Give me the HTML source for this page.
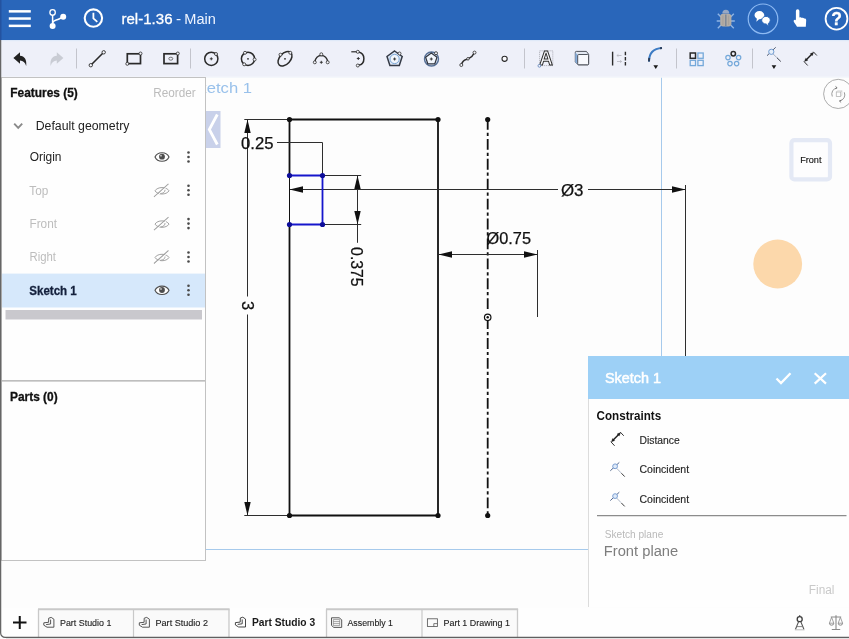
<!DOCTYPE html>
<html lang="en">
<head>
<meta charset="utf-8">
<title>rel-1.36 - Main</title>
<style>
html,body{margin:0;padding:0;background:#fdfdfd;overflow:hidden;}
body{width:849px;height:639px;position:relative;font-family:"Liberation Sans",sans-serif;}
svg{position:absolute;left:0;top:0;display:block;will-change:transform;}
text{font-family:"Liberation Sans",sans-serif;}
.ui{font-family:"DejaVu Sans","Liberation Sans",sans-serif;}
</style>
</head>
<body>
<svg id="app" width="849" height="639" viewBox="0 0 849 639">
<!-- ===== canvas background ===== -->
<rect x="0" y="0" width="849" height="639" fill="#fdfdfd"/>

<!-- ===== canvas drawing ===== -->
<g id="canvas">
  <!-- plane outline -->
  <line x1="661.5" y1="77" x2="661.5" y2="400" stroke="#a6caec" stroke-width="1"/>
  <line x1="205" y1="549.5" x2="600" y2="549.5" stroke="#a6caec" stroke-width="1"/>
  <line x1="205" y1="77.3" x2="849" y2="77.3" stroke="#f2f5fb" stroke-width="1"/>
  <text x="187.4" y="92.5" font-size="15.5" fill="#99c1eb" textLength="64.6" lengthAdjust="spacingAndGlyphs">Sketch 1</text>
  <!-- collapse tab -->
  <rect x="205" y="111" width="15.500" height="37" fill="#c9d1ea"/>
  <polyline points="217.300,114.500 209.300,129.500 217.300,144.500" fill="none" stroke="#ffffff" stroke-width="2.800"/>

  <!-- orange touch circle -->
  <circle cx="777.7" cy="264" r="24.4" fill="#fcd8ab"/>

  <!-- view cube -->
  <rect x="791.400" y="140.200" width="38.600" height="39.200" rx="3" fill="#fdfdfe" stroke="#e4e9f5" stroke-width="4.200"/>
  <text x="800.200" y="163.200" font-size="9.800" fill="#161616" stroke="#161616" stroke-width="0.150" textLength="21.300" lengthAdjust="spacingAndGlyphs">Front</text>
  <!-- rotate icon -->
  <circle cx="838.200" cy="93.900" r="14.600" fill="#fdfdfd" stroke="#a4a4a4" stroke-width="0.900"/>
  <path d="M832.300,96.500 a6.300,6.300 0 0 1 4.800,-8.700 M844.300,92.300 a6.300,6.300 0 0 1 -4.800,8.700" fill="none" stroke="#8f8f8f" stroke-width="0.900"/>
  <path d="M837.100,87.800 l-1.600,-1.400 M837.100,87.800 l-1.900,1 M839.500,101 l1.600,1.400 M839.500,101 l1.900,-1" fill="none" stroke="#6f6f6f" stroke-width="0.900"/>
  <rect x="836.300" y="92" width="4.400" height="4.400" fill="none" stroke="#b4b4b4" stroke-width="0.800"/>
  <path d="M836.300,92 l1.200,-1.200 h4.400 v4.400 l-1.200,1.200 M840.700,92 l1.200,-1.200" fill="none" stroke="#c4c4c4" stroke-width="0.600"/>
  <!-- main geometry -->
  <g stroke="#111" fill="none">
    <path d="M289.500,175.500 V119.500 H438 V515.500 H289.500 V224.500" stroke-width="1.800"/>
    <line x1="289.500" y1="175.500" x2="289.500" y2="224.500" stroke-width="1"/>
    <line x1="487.7" y1="119" x2="487.7" y2="515" stroke-width="1.8" stroke-dasharray="10.8,2.96,3.2,2.96"/>
    <!-- dim 3 vertical -->
    <g stroke-width="1" stroke="#2e2e2e">
      <line x1="244.3" y1="119.5" x2="289" y2="119.5"/>
      <line x1="244.3" y1="515.5" x2="289" y2="515.5"/>
      <line x1="247.500" y1="120" x2="247.500" y2="296.500"/>
      <line x1="247.500" y1="314.500" x2="247.500" y2="515"/>
      <!-- 0.25 -->
      <line x1="277" y1="142.500" x2="322.500" y2="142.500"/>
      <line x1="322.500" y1="142.500" x2="322.500" y2="175"/>
      <!-- 0.375 -->
      <line x1="322" y1="175.5" x2="361.2" y2="175.5"/>
      <line x1="322" y1="224.5" x2="361.2" y2="224.5"/>
      <line x1="357.5" y1="176" x2="357.5" y2="242.8"/>
      <!-- dia 3 -->
      <line x1="290" y1="189.500" x2="558" y2="189.500"/>
      <line x1="588" y1="189.500" x2="685" y2="189.500"/>
      <line x1="685.500" y1="185" x2="685.500" y2="357"/>
      <!-- dia 0.75 -->
      <line x1="439" y1="254.500" x2="537" y2="254.500"/>
      <line x1="537.500" y1="250" x2="537.500" y2="317"/>
    </g>
  </g>
  <!-- arrows -->
  <g fill="#111">
    <polygon points="247.500,119.500 244.300,133 250.700,133"/>
    <polygon points="247.500,515.500 244.300,502 250.700,502"/>
    <polygon points="357.500,175.500 354.300,189 360.700,189"/>
    <polygon points="357.500,224.500 354.300,211 360.700,211"/>
    <polygon points="289.500,189.500 303,186.300 303,192.700"/>
    <polygon points="685.500,189.500 672,186.300 672,192.700"/>
    <polygon points="438.500,254.500 452,251.300 452,257.700"/>
    <polygon points="537.500,254.500 524,251.300 524,257.700"/>
    <!-- points -->
    <circle cx="289.500" cy="119.500" r="2.600"/>
    <circle cx="438" cy="119.500" r="2.600"/>
    <circle cx="289.500" cy="515.500" r="2.600"/>
    <circle cx="438" cy="515.500" r="2.600"/>
    <circle cx="487.7" cy="119.5" r="2.6"/>
    <circle cx="487.7" cy="515.5" r="2.6"/>
  </g>
  <rect x="486" y="310" width="3.4" height="4" fill="#fdfdfd"/>
  <circle cx="487.7" cy="317.3" r="3.25" fill="#fdfdfd" stroke="#111" stroke-width="1.2"/>
  <circle cx="487.7" cy="317.3" r="1.2" fill="#111"/>
  <!-- blue selected rectangle -->
  <path d="M289.500,175.500 H322.500 V224.500 H289.500" fill="none" stroke="#1616cc" stroke-width="1.800"/>
  <g fill="#0d0d9a">
    <circle cx="289.500" cy="175.500" r="2.600"/>
    <circle cx="322.500" cy="175.500" r="2.600"/>
    <circle cx="289.500" cy="224.500" r="2.600"/>
    <circle cx="322.500" cy="224.500" r="2.600"/>
  </g>
  <!-- dimension text -->
  <g fill="#111" stroke="#111" stroke-width="0.25" font-size="16.5">
    <text x="241" y="148.500" textLength="32.500" lengthAdjust="spacingAndGlyphs">0.25</text>
    <text x="561" y="195.500" textLength="22.500" lengthAdjust="spacingAndGlyphs">Ø3</text>
    <text x="486.500" y="244" textLength="44.500" lengthAdjust="spacingAndGlyphs">Ø0.75</text>
    <text transform="translate(350.9,247.1) rotate(90)" x="0" y="0" textLength="39.5" lengthAdjust="spacingAndGlyphs">0.375</text>
    <text transform="translate(241.500,301) rotate(90)" x="0" y="0">3</text>
  </g>
</g>

<!-- ===== top bar ===== -->
<g id="topbar">
  <rect x="0" y="0" width="849" height="40" fill="#2966ba"/>
  <rect x="0" y="0" width="1.500" height="40" fill="#2453a0"/>
  <!-- hamburger -->
  <g fill="#fff">
    <rect x="8.800" y="10.100" width="22" height="2.500"/>
    <rect x="8.800" y="17.300" width="22" height="2.500"/>
    <rect x="8.800" y="24.600" width="22" height="2.500"/>
  </g>
  <!-- branch -->
  <g stroke="#fff" fill="none" stroke-width="1.500">
    <line x1="52.600" y1="15" x2="52.600" y2="25"/>
    <path d="M52.600,23 C53,20 56,20.500 59,19 C61,18 62,17.500 63,16.800"/>
    <circle cx="52.600" cy="12.400" r="2.700" stroke-width="1.300"/>
  </g>
  <circle cx="52.600" cy="26" r="3" fill="#fff"/>
  <circle cx="63.200" cy="16.700" r="3" fill="#fff"/>
  <!-- clock -->
  <circle cx="93.400" cy="18.100" r="8.700" fill="none" stroke="#fff" stroke-width="2.100"/>
  <polyline points="93.400,12.800 93.400,18.300 97.300,21.800" fill="none" stroke="#fff" stroke-width="1.800"/>
  <!-- title -->
  <text x="121.500" y="24.300" font-size="15.500" fill="#fff" stroke="#fff" stroke-width="0.300" textLength="51" lengthAdjust="spacingAndGlyphs">rel-1.36</text>
  <text x="175.9" y="24.3" font-size="15.5" fill="#eef4ff">-</text>
  <text x="184.3" y="24.3" font-size="15.5" fill="#eef4ff" textLength="31.6" lengthAdjust="spacingAndGlyphs">Main</text>
  <!-- bug -->
  <g id="bug">
    <g stroke="#8fb4e4" stroke-width="1.400" fill="none">
      <path d="M721,17 l-3.200,-3.200 M720.500,21 h-3.800 M721,25 l-3.200,3.200 M730.600,17 l3.200,-3.200 M731,21 h3.800 M730.600,25 l3.200,3.200"/>
    </g>
    <path d="M722.300,13.600 a3.500,3.900 0 0 1 7,0 z" fill="#97a8c4"/>
    <rect x="720.200" y="13.800" width="11.200" height="12.600" rx="3" fill="#b3ada6"/>
    <rect x="725.300" y="14.500" width="1.100" height="11.500" fill="#6c7a92"/>
    <rect x="722.600" y="15.500" width="0.700" height="9.500" fill="#a09a94"/>
    <rect x="728.400" y="15.500" width="0.700" height="9.500" fill="#a09a94"/>
  </g>
  <!-- chat -->
  <circle cx="763" cy="18.800" r="14.800" fill="none" stroke="#8dbaf3" stroke-width="1.200"/>
  <g fill="#fff">
    <path d="M754.500,15.200 a4.900,4.100 0 1 1 4.600,4.100 l-2.800,2.400 l0.600,-3 a4.900,4.100 0 0 1 -2.400,-3.500z"/>
    <path d="M770.300,20.200 a4.300,3.800 0 1 0 -4.100,3.800 l2.600,2.300 l-0.500,-2.900 a4.300,3.800 0 0 0 2,-3.200z" stroke="#2966ba" stroke-width="0.900"/>
  </g>
  <!-- hand -->
  <path d="M795.900,10.900 a1.750,1.750 0 0 1 3.500,0 v6.600 c1.100,-0.600 2,-0.300 2.400,0.400 c1,-0.500 1.900,-0.100 2.300,0.700 c1.200,-0.300 2.100,0.400 2.100,1.700 l-0.400,6.500 h-8.800 c-0.800,-1.900 -2.300,-3.300 -3.200,-5.100 c-0.600,-1.400 1,-2.500 2,-1.400 l0.100,0.200 z" fill="#fff"/>
  <!-- help -->
  <circle cx="836.500" cy="18.700" r="10.900" fill="none" stroke="#fff" stroke-width="1.800"/>
  <text x="836.500" y="25" font-size="17.500" font-weight="bold" fill="#fff" stroke="#fff" stroke-width="0.300" text-anchor="middle">?</text>
</g>

<!-- ===== toolbar ===== -->
<g id="toolbar">
  <rect x="0" y="40" width="849" height="36.8" fill="#eef0f9"/>
  <rect x="0" y="40" width="849" height="1.200" fill="#dfe9f8"/>
  <!-- separators -->
  <g stroke="#c3c4cc" stroke-width="1">
    <line x1="76.500" y1="48.500" x2="76.500" y2="68.500"/>
    <line x1="190.500" y1="48.500" x2="190.500" y2="68.500"/>
    <line x1="524.500" y1="48.500" x2="524.500" y2="68.500"/>
    <line x1="676.500" y1="48.500" x2="676.500" y2="68.500"/>
    <line x1="752.500" y1="48.500" x2="752.500" y2="68.500"/>
  </g>
  <!-- undo -->
  <path id="undo" d="M13.400,58 L20,52.300 V55.700 C24.500,55.900 27,59.500 26.200,66 C25,62.300 23.200,60.600 20,60.500 V63.800 Z" fill="#222"/>
  <!-- redo -->
  <path d="M63.400,58 L56.800,52.300 V55.700 C52.300,55.900 49.800,59.500 50.600,66 C51.800,62.300 53.600,60.600 56.800,60.500 V63.800 Z" fill="#c9ccd4"/>
  <!-- line -->
  <g stroke="#2a2a2a" fill="#f4f5fb">
    <line x1="91.500" y1="64.500" x2="103" y2="53" stroke-width="1.600"/>
    <circle cx="90.800" cy="65.200" r="1.700" stroke-width="0.900"/>
    <circle cx="103.700" cy="52.300" r="1.700" stroke-width="0.900"/>
  </g>
  <!-- rectangle -->
  <g stroke="#2a2a2a" fill="none">
    <rect x="127.300" y="53.800" width="13.200" height="9.800" stroke-width="1.700"/>
    <circle cx="140.500" cy="53.500" r="1.500" fill="#f4f5fb" stroke-width="0.800"/>
    <circle cx="127.300" cy="63.800" r="1.500" fill="#f4f5fb" stroke-width="0.800"/>
  </g>
  <!-- center rectangle -->
  <g stroke="#2a2a2a" fill="none">
    <rect x="164" y="53.800" width="13.600" height="9.800" stroke-width="1.700"/>
    <circle cx="177.800" cy="53.500" r="1.500" fill="#f4f5fb" stroke-width="0.800"/>
    <ellipse cx="170.800" cy="58.700" rx="2" ry="1.500" stroke-width="0.800" stroke="#555"/>
  </g>
  <!-- circle -->
  <g stroke="#2a2a2a" fill="none">
    <circle cx="211.300" cy="58.800" r="6.600" stroke-width="1.500"/>
    <path d="M209.800,58.800 h3 M211.300,57.300 v3" stroke-width="0.900"/>
    <circle cx="216" cy="54" r="1.500" fill="#f4f5fb" stroke-width="0.800"/>
  </g>
  <!-- 3 point circle -->
  <g stroke="#2a2a2a" fill="none">
    <circle cx="248" cy="58.800" r="6.600" stroke-width="1.500"/>
    <circle cx="248" cy="58.800" r="0.900" fill="#2a2a2a" stroke="none"/>
    <circle cx="245" cy="52.800" r="1.500" fill="#f4f5fb" stroke-width="0.800"/>
    <circle cx="254.600" cy="59.500" r="1.500" fill="#f4f5fb" stroke-width="0.800"/>
    <circle cx="244.200" cy="64.300" r="1.500" fill="#f4f5fb" stroke-width="0.800"/>
  </g>
  <!-- ellipse -->
  <g stroke="#2a2a2a" fill="none">
    <ellipse cx="285" cy="58.800" rx="8.500" ry="5.400" transform="rotate(-47 285 58.800)" stroke-width="1.500"/>
    <circle cx="285" cy="58.800" r="0.900" fill="#2a2a2a" stroke="none"/>
    <circle cx="280.500" cy="54.700" r="1.500" fill="#f4f5fb" stroke-width="0.800"/>
    <circle cx="290.300" cy="52.800" r="1.500" fill="#f4f5fb" stroke-width="0.800"/>
  </g>
  <!-- 3 point arc -->
  <g stroke="#2a2a2a" fill="none">
    <path d="M314.800,62 A6.600,8 0 0 1 327.800,62" stroke-width="1.500"/>
    <path d="M319.800,62.300 h3 M321.300,60.800 v3" stroke-width="0.900"/>
    <circle cx="314.800" cy="62.300" r="1.500" fill="#f4f5fb" stroke-width="0.800"/>
    <circle cx="327.700" cy="62.300" r="1.500" fill="#f4f5fb" stroke-width="0.800"/>
    <circle cx="321.300" cy="54.300" r="1.500" fill="#f4f5fb" stroke-width="0.800"/>
  </g>
  <!-- tangent arc -->
  <g stroke="#2a2a2a" fill="none">
    <line x1="351.300" y1="51.800" x2="357" y2="51.800" stroke-width="1.200"/>
    <path d="M358.500,52 A6.800,6.800 0 0 1 358.500,65.300" stroke-width="1.500"/>
    <path d="M356.800,58.500 h3 M358.300,57 v3" stroke-width="0.900"/>
    <circle cx="357.800" cy="51.800" r="1.500" fill="#f4f5fb" stroke-width="0.800"/>
    <circle cx="357.800" cy="65.500" r="1.500" fill="#f4f5fb" stroke-width="0.800"/>
  </g>
  <!-- inscribed polygon -->
  <g fill="none">
    <polygon points="394.600,51 402.200,56.500 399.300,65.400 389.900,65.400 387,56.500" stroke="#353b47" stroke-width="1.500" fill="#dfe8f6"/>
    <circle cx="394.600" cy="59" r="4.600" stroke="#7aa6d6" stroke-width="1" fill="#f2f6fc"/>
    <path d="M393.100,59 h3 M394.600,57.500 v3" stroke="#2a2a2a" stroke-width="0.900"/>
    <circle cx="399.500" cy="53.500" r="1.500" fill="#f4f5fb" stroke="#2a2a2a" stroke-width="0.800"/>
  </g>
  <!-- circumscribed polygon -->
  <g fill="none">
    <circle cx="431.5" cy="59" r="7" stroke="#566f96" stroke-width="1.4" fill="#dfe8f6"/>
    <polygon points="431.300,53 437,57.200 434.800,63.800 427.800,63.800 425.600,57.200" stroke="#2f3540" stroke-width="1.200" fill="#f2f6fc"/>
    <path d="M429.800,59 h3 M431.300,57.500 v3" stroke="#2a2a2a" stroke-width="0.900"/>
    <circle cx="436" cy="53.200" r="1.500" fill="#f4f5fb" stroke="#2a2a2a" stroke-width="0.800"/>
  </g>
  <!-- spline -->
  <g stroke="#2a2a2a" fill="none">
    <path d="M461.500,64.500 C463,59 466,60 468,58.800 C470.500,57.500 472.500,57 474.200,53" stroke-width="1.500"/>
    <circle cx="461.300" cy="65" r="1.500" fill="#f4f5fb" stroke-width="0.800"/>
    <circle cx="468" cy="58.800" r="1.300" fill="#f4f5fb" stroke-width="0.800"/>
    <circle cx="474.500" cy="52.600" r="1.500" fill="#f4f5fb" stroke-width="0.800"/>
  </g>
  <!-- point -->
  <circle cx="504.600" cy="58.800" r="2.600" fill="#fbfbfe" stroke="#2a2a2a" stroke-width="1.100"/>
  <!-- text tool -->
  <g>
    <rect x="539.6" y="50.8" width="13.2" height="14.8" fill="none" stroke="#8a8a94" stroke-width="0.7" stroke-dasharray="1,1"/>
    <text x="546.1" y="65" font-size="19.5" font-weight="bold" text-anchor="middle" fill="#fbfbfe" stroke="#2a2a2a" stroke-width="1" textLength="13.6" lengthAdjust="spacingAndGlyphs">A</text>
    <circle cx="539.4" cy="65.8" r="1.4" fill="#f4f5fb" stroke="#5b7fb8" stroke-width="0.8"/>
  </g>
  <!-- use / convert -->
  <g stroke-linejoin="round">
    <path d="M575.3,52.4 Q575.3,51.4 576.3,51.4 H586.4 L588.6,54.2 V63.8 Q588.6,64.8 587.6,64.8 H578.2 L575.3,61.9 Z" fill="#e3e8f2" stroke="#3f444d" stroke-width="0.9"/>
    <path d="M575.3,52.4 L577.7,54.8 V64.4 L575.3,61.9 Z" fill="#86addb"/>
    <rect x="577.7" y="54.5" width="10.9" height="10.3" rx="1" fill="#f8f9fd" stroke="#3f444d" stroke-width="0.9"/>
  </g>
  <!-- mirror -->
  <g fill="none">
    <line x1="612.600" y1="51.700" x2="612.600" y2="65.500" stroke="#2a2a2a" stroke-width="1.400"/>
    <line x1="625.400" y1="51.700" x2="625.400" y2="65.500" stroke="#2a2a2a" stroke-width="1.400" stroke-dasharray="3.600,1.600"/>
    <path d="M617,55.500 h4.500 M617,61.500 h4.500" stroke="#b4b4bc" stroke-width="0.800"/>
    <path d="M618.500,54.300 l-1.700,1.200 l1.700,1.200 M620,60.300 l1.700,1.200 l-1.700,1.200" stroke="#b4b4bc" stroke-width="0.700"/>
  </g>
  <!-- fillet -->
  <path d="M649,61.500 C649,53 654,48.500 662,48" fill="none" stroke="#3d7cc4" stroke-width="2"/>
  <path d="M649,61.500 C649,60 649.100,59 649.300,58 M660,48.200 L662,48" fill="none" stroke="#2b3f5c" stroke-width="2"/>
  <polygon points="653.400,65.300 658.100,65.300 655.750,68.900" fill="#1a1a1a"/>
  <!-- linear pattern -->
  <g fill="none" stroke-width="1.300">
    <rect x="690.200" y="53" width="5.300" height="5.300" stroke="#2a2a2a" stroke-width="1.500"/>
    <rect x="697.900" y="53" width="5.300" height="5.300" stroke="#74a8da"/>
    <rect x="690.200" y="60.300" width="5.300" height="5.300" stroke="#74a8da"/>
    <rect x="697.900" y="60.300" width="5.300" height="5.300" stroke="#74a8da"/>
  </g>
  <!-- circular pattern -->
  <g fill="none" stroke-width="1.200">
    <circle cx="733.300" cy="53.800" r="2.200" stroke="#2a2a2a" stroke-width="1.500"/>
    <circle cx="738.600" cy="57.600" r="2.200" stroke="#74a8da"/>
    <circle cx="736.600" cy="63.600" r="2.200" stroke="#74a8da"/>
    <circle cx="730" cy="63.600" r="2.200" stroke="#74a8da"/>
    <circle cx="728" cy="57.600" r="2.200" stroke="#74a8da"/>
  </g>
  <!-- coincident -->
  <g fill="none">
    <line x1="767" y1="55.700" x2="775.700" y2="47.300" stroke="#4d5a72" stroke-width="1"/>
    <line x1="773" y1="53.800" x2="777" y2="57.800" stroke="#9aa5b8" stroke-width="0.900"/>
    <line x1="777" y1="57.800" x2="780.800" y2="61.500" stroke="#3a3f4a" stroke-width="1"/>
    <circle cx="771.300" cy="51.800" r="2.600" fill="#e6effa" stroke="#6f9ad0" stroke-width="1"/>
    <polygon points="771.600,65.300 776.300,65.300 773.950,68.900" fill="#1a1a1a"/>
  </g>
  <!-- dimension -->
  <g fill="none" stroke="#1e1e1e">
    <line x1="805.81" y1="60.18" x2="812.24" y2="53.72" stroke-width="1.400"/>
    <polygon points="804.40,61.60 807.86,60.25 805.73,58.13" fill="#1e1e1e" stroke-width="0.300"/>
    <polygon points="813.65,52.30 812.32,55.77 810.19,53.65" fill="#1e1e1e" stroke-width="0.300"/>
    <path d="M803.90,61.40 L807.70,65.50 M813.35,51.80 L816.85,55.50" stroke-width="0.900"/>
  </g>
</g>

<!-- ===== left panel ===== -->
<g id="leftpanel">
  <rect x="1.5" y="77.5" width="204" height="483" fill="#fefefe" stroke="#c2c2c2" stroke-width="1"/>
  <rect x="2" y="273.6" width="203" height="33.9" fill="#d6e8fb"/>
  <rect x="5.500" y="310" width="196.500" height="9.500" fill="#c9c8cd"/>
  <line x1="2" y1="380.9" x2="205" y2="380.9" stroke="#a9a9a9" stroke-width="1.2"/>
  <text x="10.300" y="96.800" font-size="12.300" font-weight="bold" fill="#111" stroke="#111" stroke-width="0.3" textLength="67.500" lengthAdjust="spacingAndGlyphs">Features (5)</text>
  <text x="153.200" y="97.300" font-size="12.300" fill="#bcbcbc" textLength="42.500" lengthAdjust="spacingAndGlyphs">Reorder</text>
  <polyline points="14.2,123.7 18.2,127.9 22.2,123.7" fill="none" stroke="#8a8a8a" stroke-width="1.9"/>
  <text x="35.700" y="130.100" font-size="12.300" fill="#222" textLength="93.700" lengthAdjust="spacingAndGlyphs">Default geometry</text>
  <text x="29.700" y="161.200" font-size="12.300" fill="#222" textLength="31.800" lengthAdjust="spacingAndGlyphs">Origin</text>
  <text x="29.300" y="194.500" font-size="12.300" fill="#bdbdbd" textLength="19" lengthAdjust="spacingAndGlyphs">Top</text>
  <text x="29.500" y="227.800" font-size="12.300" fill="#bdbdbd" textLength="27.500" lengthAdjust="spacingAndGlyphs">Front</text>
  <text x="29.500" y="261.200" font-size="12.300" fill="#bdbdbd" textLength="26.500" lengthAdjust="spacingAndGlyphs">Right</text>
  <text x="29.300" y="294.600" font-size="12.300" font-weight="bold" fill="#14203c" stroke="#14203c" stroke-width="0.3" textLength="47.500" lengthAdjust="spacingAndGlyphs">Sketch 1</text>
  <text x="10" y="400.8" font-size="12.300" font-weight="bold" fill="#111" stroke="#111" stroke-width="0.3" textLength="47.700" lengthAdjust="spacingAndGlyphs">Parts (0)</text>
  <g transform="translate(162,157)">
    <path d="M-7,0 C-4.500,-5.600 4.500,-5.600 7,0 C4.500,5.600 -4.500,5.600 -7,0 Z" fill="#fefefe" stroke="#4d4d4d" stroke-width="1.100"/>
    <circle cx="0" cy="-0.300" r="2.900" fill="#4d4d4d"/>
    <circle cx="-1" cy="-1.300" r="0.900" fill="#fefefe" opacity="0.700"/>
  </g>
  <g fill="#4a4a4a"><circle cx="188.500" cy="152.5" r="1.3"/><circle cx="188.500" cy="157" r="1.3"/><circle cx="188.500" cy="161.5" r="1.3"/></g>
  <g transform="translate(162,190.3)" fill="none" stroke="#a2a2a2">
    <path d="M-7,0.500 C-4.500,-3.800 4.500,-3.800 7,0.500 C4.500,4.800 -4.500,4.800 -7,0.500 Z" stroke-width="1"/>
    <path d="M-2.500,2.500 C-0.500,4 3,2.500 3,-0.500" stroke-width="1"/>
    <line x1="-8" y1="6.500" x2="6.500" y2="-6.500" stroke-width="1.100"/>
    <line x1="-7.200" y1="7.400" x2="7.300" y2="-5.600" stroke-width="1" stroke="#fefefe"/>
  </g>
  <g fill="#4a4a4a"><circle cx="188.500" cy="185.8" r="1.3"/><circle cx="188.500" cy="190.3" r="1.3"/><circle cx="188.500" cy="194.8" r="1.3"/></g>
  <g transform="translate(162,223.6)" fill="none" stroke="#a2a2a2">
    <path d="M-7,0.500 C-4.500,-3.800 4.500,-3.800 7,0.500 C4.500,4.800 -4.500,4.800 -7,0.500 Z" stroke-width="1"/>
    <path d="M-2.500,2.500 C-0.500,4 3,2.500 3,-0.500" stroke-width="1"/>
    <line x1="-8" y1="6.500" x2="6.500" y2="-6.500" stroke-width="1.100"/>
    <line x1="-7.200" y1="7.400" x2="7.300" y2="-5.600" stroke-width="1" stroke="#fefefe"/>
  </g>
  <g fill="#4a4a4a"><circle cx="188.500" cy="219.1" r="1.3"/><circle cx="188.500" cy="223.6" r="1.3"/><circle cx="188.500" cy="228.1" r="1.3"/></g>
  <g transform="translate(162,257)" fill="none" stroke="#a2a2a2">
    <path d="M-7,0.500 C-4.500,-3.800 4.500,-3.800 7,0.500 C4.500,4.800 -4.500,4.800 -7,0.500 Z" stroke-width="1"/>
    <path d="M-2.500,2.500 C-0.500,4 3,2.500 3,-0.500" stroke-width="1"/>
    <line x1="-8" y1="6.500" x2="6.500" y2="-6.500" stroke-width="1.100"/>
    <line x1="-7.200" y1="7.400" x2="7.300" y2="-5.600" stroke-width="1" stroke="#fefefe"/>
  </g>
  <g fill="#4a4a4a"><circle cx="188.500" cy="252.5" r="1.3"/><circle cx="188.500" cy="257" r="1.3"/><circle cx="188.500" cy="261.5" r="1.3"/></g>
  <g transform="translate(162,290.3)">
    <path d="M-7,0 C-4.500,-5.600 4.500,-5.600 7,0 C4.500,5.600 -4.500,5.600 -7,0 Z" fill="#fefefe" stroke="#4d4d4d" stroke-width="1.100"/>
    <circle cx="0" cy="-0.300" r="2.900" fill="#4d4d4d"/>
    <circle cx="-1" cy="-1.300" r="0.900" fill="#fefefe" opacity="0.700"/>
  </g>
  <g fill="#4a4a4a"><circle cx="188.500" cy="285.8" r="1.3"/><circle cx="188.500" cy="290.3" r="1.3"/><circle cx="188.500" cy="294.8" r="1.3"/></g>
</g>

<!-- ===== right panel ===== -->
<g id="rightpanel">
  <rect x="588" y="356" width="261" height="251.500" fill="#fefefe"/>
  <rect x="588" y="356" width="261" height="43" fill="#9dd0f6"/>
  <line x1="588.500" y1="399" x2="588.500" y2="607" stroke="#dcdcdc" stroke-width="1"/>
  <text x="604.900" y="383.300" font-size="14.300" fill="#fff" stroke="#fff" stroke-width="0.5" textLength="56" lengthAdjust="spacingAndGlyphs">Sketch 1</text>
  <polyline points="776.500,378.500 781,383 790.500,373.300" fill="none" stroke="#fff" stroke-width="2.300"/>
  <path d="M814.700,373.300 L826,383.600 M826,373.300 L814.700,383.600" fill="none" stroke="#fff" stroke-width="2.200"/>
  <text x="596.600" y="420.200" font-size="12" font-weight="bold" fill="#111" textLength="64.600" lengthAdjust="spacingAndGlyphs">Constraints</text>
  <!-- distance icon -->
  <g fill="none" stroke="#1e1e1e">
    <line x1="612.71" y1="440.48" x2="619.14" y2="434.02" stroke-width="1.400"/>
    <polygon points="611.30,441.90 614.76,440.55 612.63,438.43" fill="#1e1e1e" stroke-width="0.300"/>
    <polygon points="620.55,432.60 619.22,436.07 617.09,433.95" fill="#1e1e1e" stroke-width="0.300"/>
    <path d="M610.80,441.70 L614.60,445.80 M620.25,432.10 L623.75,435.80" stroke-width="0.900"/>
  </g>
  <text x="639.500" y="443.500" font-size="10.300" fill="#262626" stroke="#262626" stroke-width="0.150" textLength="40.200" lengthAdjust="spacingAndGlyphs">Distance</text>
  <g transform="translate(615.100,466.5)" fill="none">
    <line x1="-4.800" y1="4.300" x2="4.200" y2="-4.100" stroke="#53678c" stroke-width="1"/>
    <line x1="1.500" y1="1.700" x2="6" y2="6.400" stroke="#a3aec0" stroke-width="0.900"/>
    <line x1="6.300" y1="6.700" x2="9.600" y2="10.100" stroke="#3c3c3c" stroke-width="1"/>
    <circle cx="0" cy="-0.200" r="2.400" fill="#dfeaf8" stroke="#7a9fd4" stroke-width="1"/>
  </g>
  <text x="639.500" y="473.300" font-size="10.300" fill="#262626" stroke="#262626" stroke-width="0.150" textLength="49.600" lengthAdjust="spacingAndGlyphs">Coincident</text>
  <g transform="translate(615.100,496.3)" fill="none">
    <line x1="-4.800" y1="4.300" x2="4.200" y2="-4.100" stroke="#53678c" stroke-width="1"/>
    <line x1="1.500" y1="1.700" x2="6" y2="6.400" stroke="#a3aec0" stroke-width="0.900"/>
    <line x1="6.300" y1="6.700" x2="9.600" y2="10.100" stroke="#3c3c3c" stroke-width="1"/>
    <circle cx="0" cy="-0.200" r="2.400" fill="#dfeaf8" stroke="#7a9fd4" stroke-width="1"/>
  </g>
  <text x="639.500" y="503.100" font-size="10.300" fill="#262626" stroke="#262626" stroke-width="0.150" textLength="49.600" lengthAdjust="spacingAndGlyphs">Coincident</text>
  <line x1="597" y1="515.600" x2="846.500" y2="515.600" stroke="#8c8c8c" stroke-width="1.100"/>
  <text x="604.700" y="538" font-size="10.300" fill="#b9b9b9" textLength="58.600" lengthAdjust="spacingAndGlyphs">Sketch plane</text>
  <text x="603.800" y="555.500" font-size="14" fill="#7d7d7d" textLength="74.400" lengthAdjust="spacingAndGlyphs">Front plane</text>
  <text x="808.800" y="594.100" font-size="12.300" fill="#c9c9c9" textLength="25.600" lengthAdjust="spacingAndGlyphs">Final</text>
</g>

<!-- ===== bottom bar ===== -->
<g id="bottombar">
  <rect x="1.500" y="607.500" width="848" height="29.500" fill="#fefefe"/>
  <!-- tab groups -->
  <rect x="38.500" y="609.500" width="190.500" height="28" fill="#fafafa"/>
  <rect x="326.500" y="609.500" width="190.500" height="28" fill="#fafafa"/>
  <g fill="none" stroke="#c9c9c9">
    <path d="M38.500,637 V609.300 M229,609.300 V637" stroke-width="1.300"/>
    <line x1="38" y1="609.300" x2="229.600" y2="609.300" stroke-width="2"/>
    <line x1="133.500" y1="609" x2="133.500" y2="637" stroke-width="1.200"/>
    <path d="M326.500,637 V609.300 M517.500,609.300 V637" stroke-width="1.300"/>
    <line x1="326" y1="609.300" x2="518.100" y2="609.300" stroke-width="2"/>
    <line x1="422" y1="609" x2="422" y2="637" stroke-width="1.200"/>
  </g>
  <!-- plus -->
  <path d="M13,622.500 H26.500 M19.750,616 V629" stroke="#111" stroke-width="2" fill="none"/>
  <path transform="translate(43.7,617.3)" d="M5,0.900 L7.500,0.100 L10.200,1.900 V9.900 H3.300 L0.100,7.900 V5.500 L4.900,5 Z M2.400,7.300 L6.900,6.700 V2.300" fill="none" stroke="#444" stroke-width="0.900" stroke-linejoin="round"/>
  <text x="60" y="625.800" font-size="9.200" fill="#1c1c1c" stroke="#1c1c1c" stroke-width="0.120" textLength="51.400" lengthAdjust="spacingAndGlyphs">Part Studio 1</text>
  <path transform="translate(139.2,617.3)" d="M5,0.900 L7.500,0.100 L10.200,1.900 V9.900 H3.300 L0.100,7.900 V5.500 L4.900,5 Z M2.400,7.300 L6.900,6.700 V2.300" fill="none" stroke="#444" stroke-width="0.900" stroke-linejoin="round"/>
  <text x="155.500" y="625.800" font-size="9.200" fill="#1c1c1c" stroke="#1c1c1c" stroke-width="0.120" textLength="52.500" lengthAdjust="spacingAndGlyphs">Part Studio 2</text>
  <path transform="translate(235.3,617.1)" d="M5,0.900 L7.500,0.100 L10.200,1.900 V9.900 H3.300 L0.100,7.900 V5.500 L4.900,5 Z M2.400,7.300 L6.900,6.700 V2.300" fill="none" stroke="#333" stroke-width="0.900" stroke-linejoin="round"/>
  <text x="251.900" y="626.100" font-size="10.400" font-weight="bold" fill="#1a1a1a" textLength="63.300" lengthAdjust="spacingAndGlyphs">Part Studio 3</text>
  <!-- assembly icon -->
  <g fill="none" stroke="#444" stroke-width="0.900">
    <path d="M331.500,617.800 H339.200 L341.700,619.800 V627.400 H333.800 L331.500,625.400 Z"/>
    <path d="M333.300,619.600 H339.700 V625.600 H333.300 Z M333.300,621.600 H339.700 M333.300,623.600 H339.700" stroke-width="0.650" stroke="#777"/>
  </g>
  <text x="347.500" y="625.800" font-size="9.200" fill="#1c1c1c" stroke="#1c1c1c" stroke-width="0.120" textLength="45.500" lengthAdjust="spacingAndGlyphs">Assembly 1</text>
  <!-- drawing icon -->
  <g fill="none" stroke="#444" stroke-width="0.900">
    <rect x="427.400" y="618.800" width="10" height="7.700" stroke="#5a5a5a" stroke-width="0.850"/>
    <path d="M433.800,626.500 V623.600 H437.400" stroke="#5a5a5a" stroke-width="0.800"/>
  </g>
  <text x="443.500" y="625.800" font-size="9.200" fill="#1c1c1c" stroke="#1c1c1c" stroke-width="0.120" textLength="66.500" lengthAdjust="spacingAndGlyphs">Part 1 Drawing 1</text>
  <!-- right icons -->
  <g fill="none" stroke="#3c3c3c" stroke-width="1.100">
    <circle cx="799.700" cy="619.200" r="2.500" stroke-width="1.300"/>
    <path d="M798.600,621.600 L795.500,629.300 M800.800,621.600 L803.900,629.300" stroke="#555"/>
    <path d="M796.500,626.600 H802.900" stroke="#777" stroke-width="0.900"/>
    <path d="M794.800,629.800 H804.600" stroke="#aaa" stroke-width="0.800"/>
    <path d="M799.700,615.300 V616.600" stroke-width="1.200"/>
  </g>
  <g fill="none" stroke="#8a8a8a" stroke-width="1.100">
    <path d="M836,615.300 V629 M831.800,629.500 H840.200 M830.800,617 H841.200"/>
    <path d="M829.400,623.200 L831.600,617.300 L833.800,623.200 Z M838.200,623.200 L840.400,617.300 L842.600,623.200 Z" stroke-width="0.800"/>
    <path d="M829.400,623.200 a2.200,2 0 0 0 4.400,0 M838.200,623.200 a2.200,2 0 0 0 4.400,0" stroke-width="1"/>
  </g>
</g>

<!-- frame -->
<rect x="0" y="632" width="6" height="7" fill="#fdfdfd"/>
<path d="M0.650,40 V632.700 A4.500,4.500 0 0 0 5.150,637.400 H849" fill="none" stroke="#606060" stroke-width="1.200"/>
<rect x="6" y="638" width="843" height="1" fill="#e4e4e4"/>
</svg>
</body>
</html>
